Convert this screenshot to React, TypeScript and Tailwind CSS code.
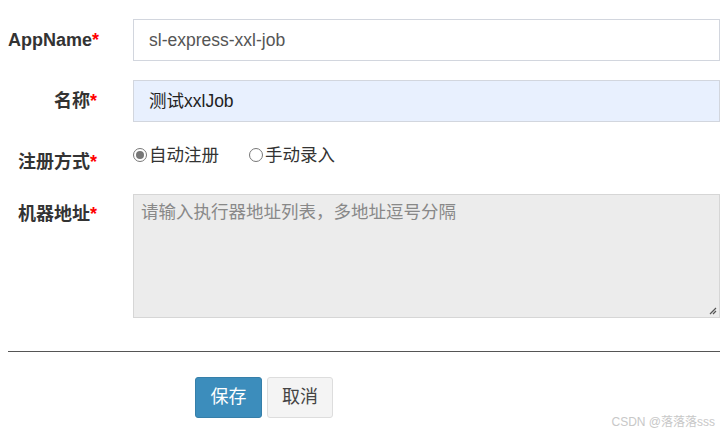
import React from "react";

const font = { fontFamily: '"Liberation Sans", Arial, "Noto Sans CJK SC", sans-serif' };

function Label({ text, className = "" }: { text: string; className?: string }) {
  return (
    <div className={`w-[89px] shrink-0 text-right font-bold text-[18px] leading-[22px] text-[#333] ${className}`}>
      {text}
      <span className="text-[#ff0000]">*</span>
    </div>
  );
}

function Radio({ checked, label }: { checked: boolean; label: string }) {
  return (
    <label className="flex items-center">
      <span className="w-[14px] h-[14px] rounded-full border-[1.5px] border-[#777] flex items-center justify-center bg-white">
        {checked && <span className="w-[8px] h-[8px] rounded-full bg-[#777]" />}
      </span>
      <span className="ml-[2px]">{label}</span>
    </label>
  );
}

export default function App() {
  return (
    <div className="relative w-[727px] h-[437px] bg-white overflow-hidden" style={font}>
      <div className="flex flex-col pt-[19px] pl-[8px] pr-[7px]">
        <div className="flex items-center">
          <Label text="AppName" />
          <div className="ml-[36px] flex-1 h-[42px] border border-[#d2d6de] bg-white flex items-center pl-[15px] text-[17.5px] text-[#555]">
            sl-express-xxl-job
          </div>
        </div>
        <div className="flex items-center mt-[19px]">
          <Label text="名称" />
          <div className="ml-[36px] flex-1 h-[42px] border border-[#d2d6de] bg-[#e8f0fe] flex items-center pl-[15px] text-[17.5px] text-[#222]">
            测试xxlJob
          </div>
        </div>
        <div className="flex items-start mt-[22px] h-[30px]">
          <Label text="注册方式" className="mt-[7px]" />
          <div className="ml-[36px] flex items-center gap-[30px] text-[17.5px] leading-[22px] text-[#333]">
            <Radio checked label="自动注册" />
            <Radio checked={false} label="手动录入" />
          </div>
        </div>
        <div className="flex items-start mt-[20px]">
          <Label text="机器地址" className="mt-[9px]" />
          <div className="ml-[36px] flex-1 h-[124px] border border-[#d6d6d6] bg-[#ececec] relative pl-[7px] pt-[4px] text-[17.5px] text-[#888]">
            请输入执行器地址列表，多地址逗号分隔
            <svg className="absolute right-[2px] bottom-[2px]" width="9" height="9" viewBox="0 0 9 9">
              <path d="M8 2 L2 8 M8 5 L5 8" stroke="#555" strokeWidth="1.2" />
            </svg>
          </div>
        </div>
        <div className="mt-[33px] h-px bg-[#555]" />
        <div className="flex mt-[25px] ml-[187px] gap-[5px]">
          <div className="w-[67px] h-[41px] rounded-[3px] bg-[#3c8dbc] border border-[#367fa9] text-white text-[18px] flex items-center justify-center">
            保存
          </div>
          <div className="w-[66px] h-[41px] rounded-[3px] bg-[#f4f4f4] border border-[#ddd] text-[#444] text-[18px] flex items-center justify-center">
            取消
          </div>
        </div>
      </div>
      <div className="absolute right-[12px] bottom-[6px] text-[12px] text-[#c8c8c8]">CSDN @落落落sss</div>
    </div>
  );
}
